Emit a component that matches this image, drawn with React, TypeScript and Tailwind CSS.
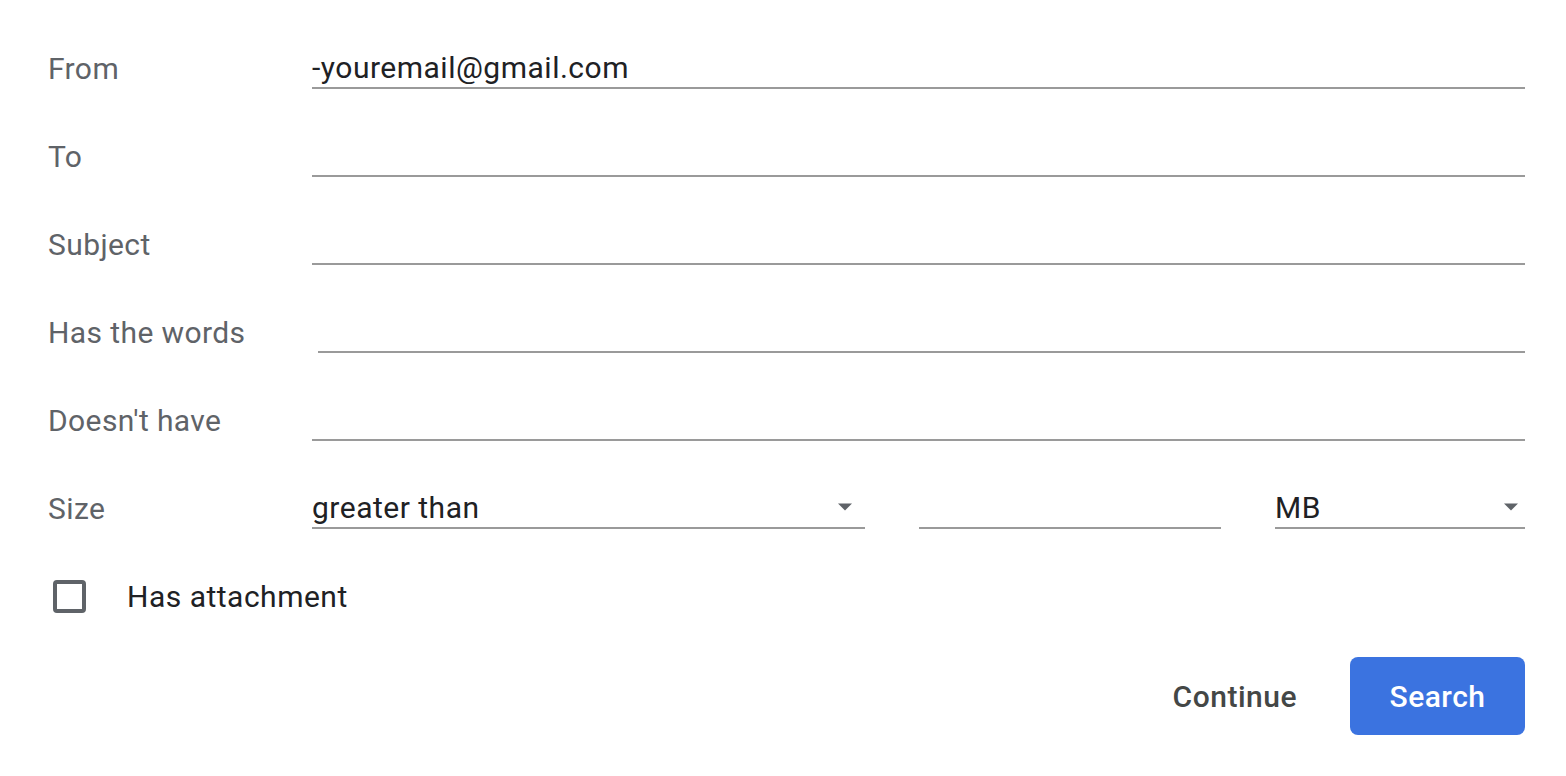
import { useState } from 'react'

const font = { fontFamily: 'Roboto, "Liberation Sans", sans-serif' }

function Caret() {
  return (
    <svg className="w-[16px] h-[10px] text-[#5f6368]" viewBox="0 0 16 10" aria-hidden="true">
      <path d="M1 1.5h14L8 8.5z" fill="currentColor" />
    </svg>
  )
}

function Row({ label, value, inset }: { label: string; value?: string; inset?: boolean }) {
  return (
    <div className="flex items-center h-[88px]">
      <div className="w-[264px] shrink-0 text-[30px] tracking-[0.4px] text-[#5f6368]">{label}</div>
      <div className={`flex-1 h-[42px] border-b-2 border-[#9a9a9a] flex items-center text-[30px] tracking-[0.5px] text-[#202124] ${inset ? 'ml-[6px]' : ''}`}>
        {value}
      </div>
    </div>
  )
}

export default function App() {
  const [checked, setChecked] = useState(false)

  return (
    <main className="min-h-screen bg-white" style={font}>
      <div className="w-[1566px] pl-[48px] pr-[41px] pt-[24px]">
        <Row label="From" value="-youremail@gmail.com" />
        <Row label="To" />
        <Row label="Subject" />
        <Row label="Has the words" inset />
        <Row label="Doesn't have" />

        <div className="flex items-center h-[88px]">
          <div className="w-[264px] shrink-0 text-[30px] tracking-[0.4px] text-[#5f6368]">Size</div>
          <div className="w-[553px] h-[42px] border-b-2 border-[#9a9a9a] flex items-center justify-between pr-[12px] text-[30px] tracking-[0.5px] text-[#202124]">
            <span>greater than</span>
            <Caret />
          </div>
          <div className="w-[302px] ml-[54px] h-[42px] border-b-2 border-[#9a9a9a]" />
          <div className="flex-1 ml-[54px] h-[42px] border-b-2 border-[#9a9a9a] flex items-center justify-between pr-[6px] text-[30px] tracking-[0.5px] text-[#202124]">
            <span>MB</span>
            <Caret />
          </div>
        </div>

        <div className="flex items-center h-[88px]">
          <button
            onClick={() => setChecked(!checked)}
            className="ml-[5px] w-[33px] h-[33px] rounded-[4px] border-[4px] border-[#5f6368]"
            aria-label="Has attachment"
          />
          <span className="ml-[41px] text-[30px] tracking-[0.5px] text-[#202124]">Has attachment</span>
        </div>

        <div className="flex items-center justify-end gap-[53px] pt-[17px]">
          <button className="text-[30px] tracking-[0.5px] font-medium text-[#444746]">Continue</button>
          <button className="w-[175px] h-[78px] rounded-[8px] bg-[#3b73e0] text-white text-[30px] tracking-[0.5px] font-medium">
            Search
          </button>
        </div>
      </div>
    </main>
  )
}
